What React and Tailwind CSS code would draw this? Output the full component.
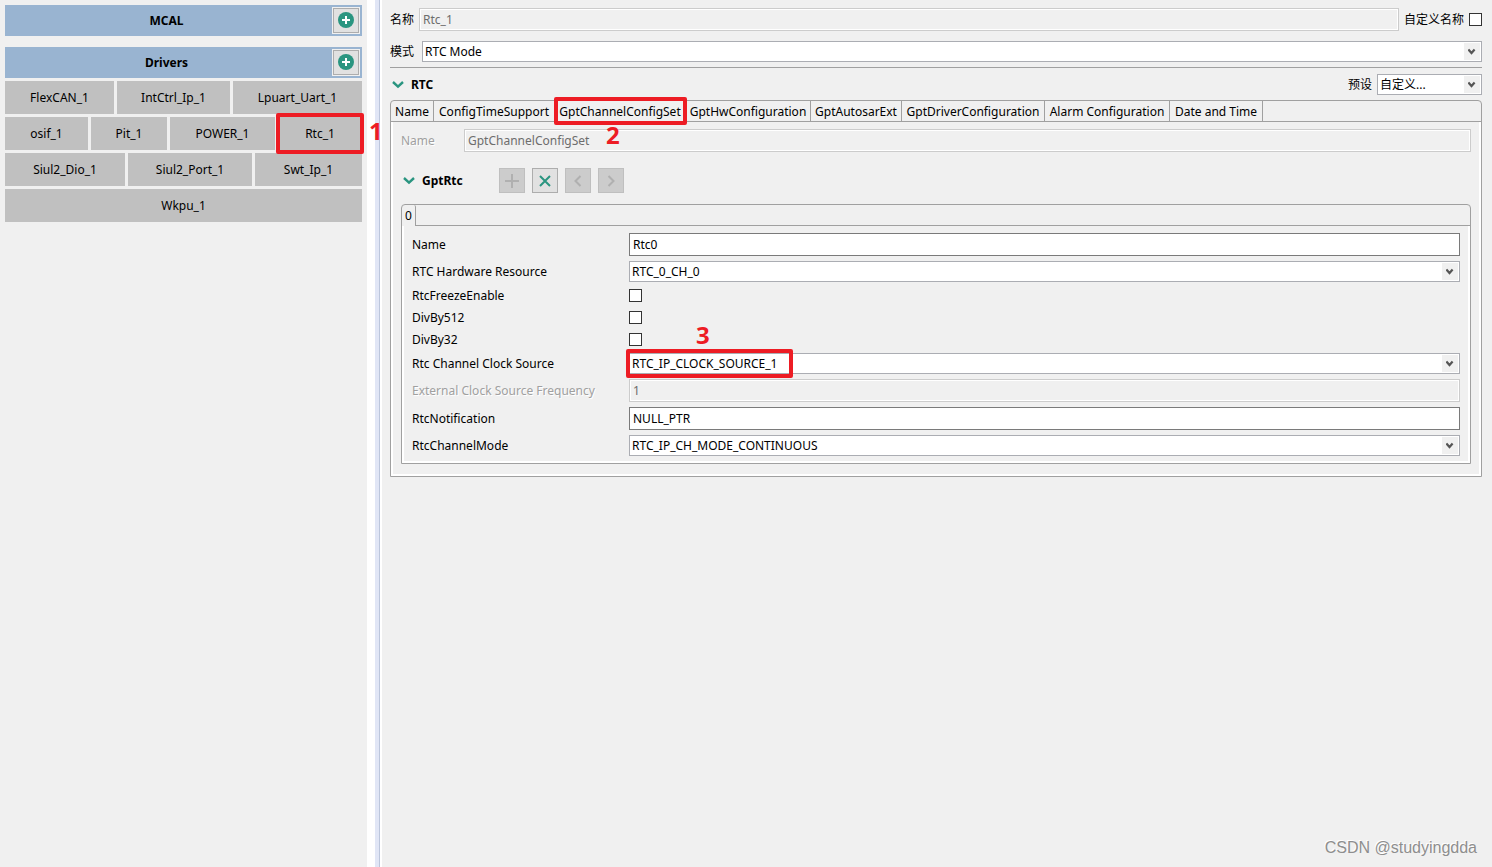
import React from "react";

function Chevron() {
  return (
    <svg width="12" height="8" viewBox="0 0 12 8" fill="none" aria-hidden="true">
      <path d="M1 1 L6 5.600 L11 1" stroke="#2a9580" strokeWidth="2.4" />
    </svg>
  );
}

function Marker({ box, digit, n }) {
  return (
    <>
      <span className={"pointer-events-none absolute z-10 rounded-xs border-4 border-[#ed1c24] " + box} />
      <span className={"pointer-events-none absolute z-10 text-2xl leading-9 font-bold text-[#ed1c24] " + digit}>
        {n}
      </span>
    </>
  );
}

function Section({ title }) {
  return (
    <div className="flex h-[31px] items-center bg-[#99b4d1] pr-0.5">
      <h2 className="flex-1 pr-1 text-center font-bold">{title}</h2>
      <button
        type="button"
        aria-label={"Add " + title}
        className="flex h-[27px] w-[28px] items-center justify-center border border-[#f0f0f0] bg-[#adadad] p-px"
      >
        <span className="flex h-full w-full items-center justify-center bg-[#e1e1e1] pb-px">
          <svg width="16" height="16" viewBox="0 0 16 16" aria-hidden="true">
            <circle cx="8" cy="8" r="8" fill="#2a9580" />
            <path d="M8 4v8M4 8h8" stroke="#fff" strokeWidth="2" />
          </svg>
        </span>
      </button>
    </div>
  );
}

const rows = [
  [
    ["FlexCAN_1", "grow-[109]"],
    ["IntCtrl_Ip_1", "grow-[113]"],
    ["Lpuart_Uart_1", "grow-[129]"],
  ],
  [
    ["osif_1", "grow-[83]"],
    ["Pit_1", "grow-[76]"],
    ["POWER_1", "grow-[105]"],
    ["Rtc_1", "grow-[84]"],
  ],
  [
    ["Siul2_Dio_1", "grow-[120]"],
    ["Siul2_Port_1", "grow-[124]"],
    ["Swt_Ip_1", "grow-[107]"],
  ],
  [["Wkpu_1", "grow"]],
];

function Sidebar() {
  return (
    <aside className="w-[367px] shrink-0 p-[5px]">
      <Section title="MCAL" />
      <div className="mt-[11px] flex flex-col gap-[3px]">
        <Section title="Drivers" />
        {rows.map((row, i) => (
          <div key={i} className="flex gap-[3px]">
            {row.map(([name, grow]) => (
              <div key={name} className={"relative flex basis-0 " + grow}>
                <button type="button" className="h-[33px] w-full bg-[#c0c0c0]">
                  {name}
                </button>
                {name === "Rtc_1" && (
                  <Marker n="1" box="-inset-x-0.5 -inset-y-1" digit="left-[91px] -top-1" />
                )}
              </div>
            ))}
          </div>
        ))}
      </div>
    </aside>
  );
}

function Select({ id, value, className = "", children }) {
  return (
    <div className={"relative flex h-[21px] min-w-0 " + className}>
      <select id={id} className="w-full appearance-none border border-[#abadb3] bg-white pr-5 pl-0.5">
        <option>{value}</option>
      </select>
      <span className="pointer-events-none absolute inset-y-0.5 right-0.5 flex w-4 items-center justify-center bg-[#f0f0f0]">
        <svg width="8" height="7" viewBox="0 0 8 7" fill="none" aria-hidden="true">
          <path d="M0.4 1.500 L3.500 5 L6.600 1.500" stroke="#555" strokeWidth="2.2" />
        </svg>
      </span>
      {children}
    </div>
  );
}

function TextBox({ id, value, disabled }) {
  return (
    <input
      id={id}
      type="text"
      defaultValue={value}
      disabled={disabled}
      className="h-[23px] w-full min-w-0 flex-1 border border-[#7a7a7a] bg-white px-[3px] disabled:border-[#cccccc] disabled:bg-[#f0f0f0] disabled:text-[#6d6d6d] disabled:inset-ring disabled:inset-ring-white"
    />
  );
}

function Check({ id }) {
  return <input id={id} type="checkbox" className="size-[13px] shrink-0 appearance-none border border-[#333] bg-white checked:bg-[#2a9580]" />;
}

function ToolButton({ label, path, disabled }) {
  return (
    <button
      type="button"
      aria-label={label}
      disabled={disabled}
      className="flex h-[25px] w-[26px] items-center justify-center border border-[#adadad] bg-[#e1e1e1] text-[#2a9580] disabled:border-[#bfbfbf] disabled:bg-[#cccccc] disabled:text-[#b0b0b0]"
    >
      <svg width="14" height="14" viewBox="0 0 14 14" fill="none" stroke="currentColor" strokeWidth="2" aria-hidden="true">
        <path d={path} />
      </svg>
    </button>
  );
}

const tabs = [
  ["Name", "w-[43px]"],
  ["ConfigTimeSupport", "w-[121px]"],
  ["GptChannelConfigSet", "w-[131px]"],
  ["GptHwConfiguration", "w-[125px]"],
  ["GptAutosarExt", "w-[91px]"],
  ["GptDriverConfiguration", "w-[143px]"],
  ["Alarm Configuration", "w-[125px]"],
  ["Date and Time", "w-[93px]"],
];

const fields = [
  ["Name", "text", "Rtc0"],
  ["RTC Hardware Resource", "select", "RTC_0_CH_0"],
  ["RtcFreezeEnable", "check"],
  ["DivBy512", "check"],
  ["DivBy32", "check"],
  ["Rtc Channel Clock Source", "select", "RTC_IP_CLOCK_SOURCE_1"],
  ["External Clock Source Frequency", "disabled", "1"],
  ["RtcNotification", "text", "NULL_PTR"],
  ["RtcChannelMode", "select", "RTC_IP_CH_MODE_CONTINUOUS"],
];

const embossed = "text-[#a0a0a0] [text-shadow:1px_1px_0_#fff]";

function Field({ label, kind, value }) {
  const id = "field-" + label.replace(/ /g, "-");
  return (
    <div className="flex items-center">
      <label htmlFor={id} className={"w-[217px] shrink-0 leading-[17px] " + (kind === "disabled" ? embossed : "")}>
        {label}
      </label>
      {kind === "check" && <Check id={id} />}
      {kind === "select" && (
        <Select id={id} value={value} className="flex-1">
          {value === "RTC_IP_CLOCK_SOURCE_1" && (
            <Marker n="3" box="-left-[3px] -inset-y-1 w-[167px]" digit="left-[67px] -top-9" />
          )}
        </Select>
      )}
      {(kind === "text" || kind === "disabled") && <TextBox id={id} value={value} disabled={kind === "disabled"} />}
    </div>
  );
}

function GptRtcPanel() {
  return (
    <div className="mt-[11px] rounded-t border border-[#a0a0a0]">
      <div className="flex h-[21px]" role="tablist">
        <button type="button" role="tab" aria-selected="true" className="w-[14px] rounded-tr-xs border-r border-[#a0a0a0] text-center">
          0
        </button>
        <div className="flex-1 border-b border-[#a0a0a0]" />
      </div>
      <div className="flex flex-col gap-[5px] border-x-2 border-b-2 border-white px-2 pt-[7px] pb-[5px]">
        {fields.map(([label, kind, value]) => (
          <Field key={label} label={label} kind={kind} value={value} />
        ))}
      </div>
    </div>
  );
}

function Editor() {
  return (
    <main className="min-w-0 flex-1 pt-2 pr-[10px] pl-2">
      <div className="flex items-center">
        <label htmlFor="name" className="w-[29px]">名称</label>
        <TextBox id="name" value="Rtc_1" disabled />
        <label htmlFor="custom-name" className="mx-[5px]">自定义名称</label>
        <Check id="custom-name" />
      </div>
      <div className="mt-[10px] flex items-center">
        <label htmlFor="mode" className="w-[32px]">模式</label>
        <Select id="mode" value="RTC Mode" className="flex-1" />
      </div>
      <hr className="mt-[5px] border-t border-[#a0a0a0]" />
      <div className="mt-[6px] flex h-[21px] items-center pl-0.5">
        <Chevron />
        <h2 className="ml-[7px] flex-1 font-bold">RTC</h2>
        <label htmlFor="preset" className="mr-[5px]">预设</label>
        <Select id="preset" value="自定义..." className="w-[105px]" />
      </div>
      <div className="mt-[5px] rounded-t border border-[#a0a0a0]">
        <div className="flex h-[21px] border-b border-[#a0a0a0]" role="tablist">
          {tabs.map(([t, width]) => (
            <div key={t} className={"relative flex " + width}>
              <button
                type="button"
                role="tab"
                aria-selected={t === "GptChannelConfigSet"}
                className="w-full border-r border-[#a0a0a0] px-[3px] pt-0.5 text-center whitespace-nowrap"
              >
                {t}
              </button>
              {t === "GptChannelConfigSet" && (
                <Marker n="2" box="-inset-x-px -inset-y-1" digit="left-[51px] top-4" />
              )}
            </div>
          ))}
        </div>
        <div className="border-x-2 border-b-2 border-white px-2 pt-[7px] pb-[10px]">
          <div className="flex items-center">
            <label htmlFor="group-name" className={"w-[63px] " + embossed}>Name</label>
            <TextBox id="group-name" value="GptChannelConfigSet" disabled />
          </div>
          <div className="mt-[16px] flex items-center pl-0.5">
            <Chevron />
            <h3 className="ml-[7px] w-[77px] font-bold">GptRtc</h3>
            <div className="flex gap-[7px]">
              <ToolButton label="Add" disabled path="M7 0v14M0 7h14" />
              <ToolButton label="Remove" path="M2 2l10 10M12 2l-10 10" />
              <ToolButton label="Previous" disabled path="M9.500 2l-5 5l5 5" />
              <ToolButton label="Next" disabled path="M4.500 2l5 5l-5 5" />
            </div>
          </div>
          <GptRtcPanel />
        </div>
      </div>
    </main>
  );
}

export default function App() {
  return (
    <div className="relative flex min-h-screen bg-[#f0f0f0] font-['Noto_Sans','Noto_Sans_CJK_SC',sans-serif] text-[12px] leading-[18px] text-black">
      <Sidebar />
      <div className="w-2 shrink-0 bg-white" />
      <div className="w-[7px] shrink-0 border-r-2 border-white bg-[#e1e6f6]">
        <div className="h-full border-r border-[#bcc6dc]" />
      </div>
      <Editor />
      <p className="absolute right-[15px] bottom-2 font-['Liberation_Sans',sans-serif] text-base leading-[22px] text-[#8e8e8e] [text-shadow:-1px_-1px_0_#fff]">
        CSDN @studyingdda
      </p>
    </div>
  );
}
